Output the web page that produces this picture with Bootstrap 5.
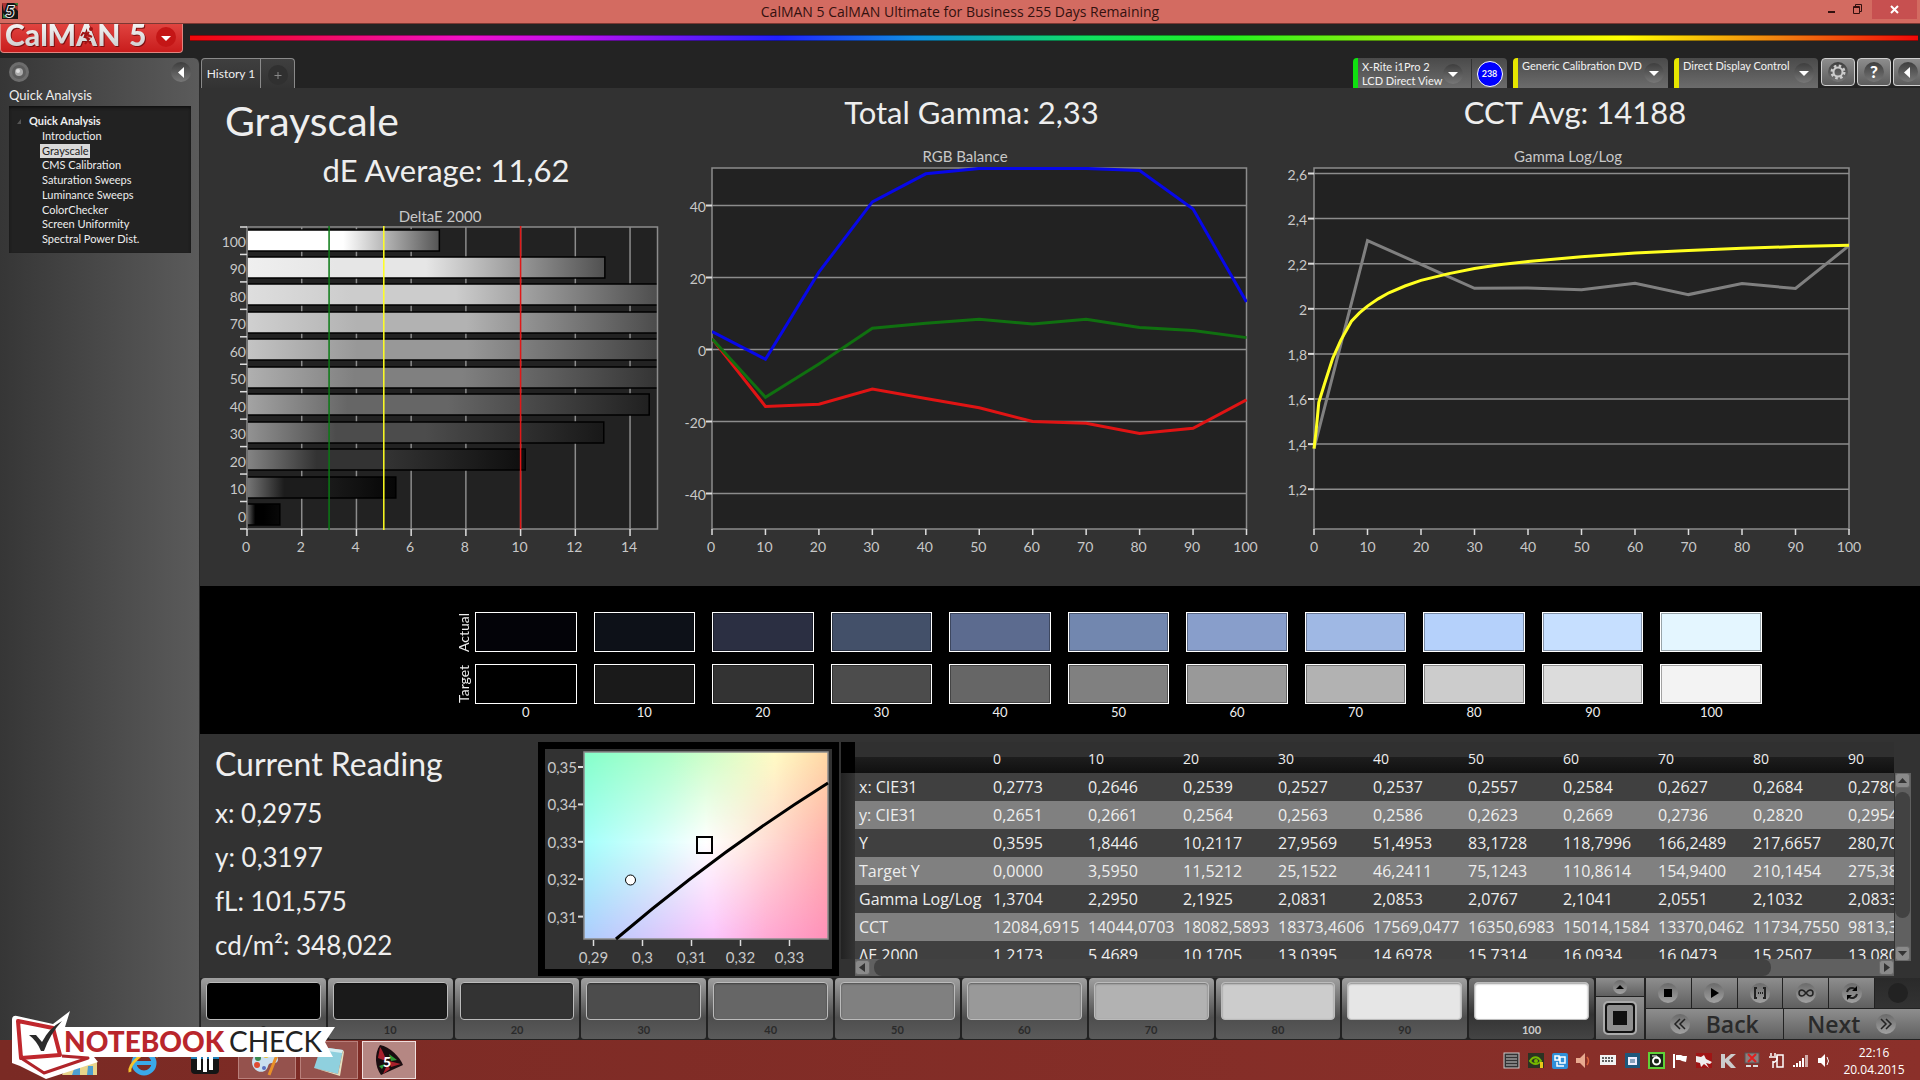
<!DOCTYPE html>
<html lang="en">
<head>
<meta charset="utf-8">
<meta name="viewport" content="width=device-width, initial-scale=1">
<title>CalMAN 5 CalMAN Ultimate for Business</title>
<link href="https://cdn.jsdelivr.net/npm/bootstrap@5.3.0/dist/css/bootstrap.min.css" rel="stylesheet">
<style>
body{background:#232323;color:#eee;font-family:Lato,"Open Sans",sans-serif;font-size:13px;line-height:16px;overflow:hidden}
button{border:0;padding:0;background:none;color:inherit;font:inherit}
svg{display:block;flex:none;overflow:visible}
a{color:inherit;text-decoration:none}
svg text{font-family:Lato,"Open Sans",sans-serif}
/* title bar */
.titlebar{height:24px;background:#d36b61;border-bottom:1px solid #7c3833;color:#33110f;font:14px/24px "Open Sans",sans-serif}
.titlebar>.winctl{right:0;top:0}
.winctl button{height:19px;width:26px}
.winctl .winclose{width:45px;background:#c75050;margin-right:3px}
/* brand row */
.brandrow{height:34px}
.brand{width:183px;height:29px;background:linear-gradient(#e04440,#c91c1c);border:1px solid #e08580;border-top:0;border-radius:0 0 4px 4px}
.brandtext{filter:drop-shadow(1px 1px 0 #7d1010)}
.rainbow{height:6px;margin:11px 2px 0 7px;background:linear-gradient(90deg,#f00808 0%,#f010c8 16%,#c010f0 22%,#2020ff 34%,#1090e0 42%,#10e060 52%,#20f020 60%,#80f010 68%,#ffff00 83%,#f08010 92%,#f00808 100%);border-top:1px solid #0006;border-bottom:1px solid #0006}
/* sidebar */
.sidebar{width:200px;background:linear-gradient(90deg,#363636,#5b5b5b);border-right:1px solid #2b2b2b;border-radius:0 6px 0 0}
.projectname{padding:3px 0 0 9px;height:22px}
.treebox{margin:0 8px 0 9px;height:147px;background:#222;box-shadow:inset 0 2px 3px #111;font-size:11px;line-height:14px;padding:8px 0 0 20px}
.treeitems{height:117px;margin:1px 0 0 11px}
.treeitems a{padding:0 1px 0 2px}
.treeitems .current{background:#d9d9d9;color:#222}
.twisty{margin:0 3px 0 -12px}
/* tabs and devices */
.toprow{height:30px}
.tabs{border:1px solid #8a8a8a;border-bottom:0;border-radius:4px 4px 0 0;background:linear-gradient(#3f3f3f,#333);height:30px;margin-left:1px}
.tabs button+button{border-left:1px solid #8a8a8a;width:34px}
.tabs button:first-child{width:58px;font-size:12px}
.device{height:30px;background:linear-gradient(#4a4a4a,#6c6c6c);border-left:5px solid #e6e600;border-radius:4px 4px 0 0;color:#f2f2f2;font-size:11px;line-height:14px;text-align:left;white-space:nowrap;margin-right:6px;padding-top:1px}
.device.ready{border-left-color:#10e010;width:154px}
.device button{text-align:left}
.dev-source{width:155px}
.dev-display{width:144px;margin-right:3px}
.meter{border-left:1px solid #333;width:36px}
.count{width:26px;height:26px;border-radius:50%;background:#00f;border:1px solid #fff;font-size:9px;font-weight:700;line-height:24px;text-align:center}
.toolbtn{width:34px;height:28px;border:1px solid #cfcfcf;border-radius:4px;background:linear-gradient(#8d8d8d,#5c5c5c);margin-right:2px}
.toolbtn:last-child{width:27px;margin-right:0}
/* work area */
.panel{background:#323232}
.charts{display:grid;grid-template-columns:492fr 572fr 656fr}
.charts svg{width:100%;height:auto}
h1{font-size:41px;line-height:56px;margin:5px 0 0 25px;font-weight:400}
h2{font-size:31px;line-height:42px;margin:0;text-align:center;font-weight:400}
.t-gamma{padding:3px 13px 0 0}
.t-cct{padding:3px 34px 0 0}
.swatchband{background:#000;height:148px;padding:26px 158px 0 252px}
.swatchrow{display:grid;grid-template-columns:repeat(11,1fr);gap:17px}
.swatchrow>div{height:40px;border:1px solid #fff;box-shadow:inset 0 0 0 1px #0005}
.swatchrow>span{text-align:center}
.sidelabel{writing-mode:vertical-rl;transform:rotate(180deg);width:23px;line-height:23px;height:40px;text-align:center;font-size:14px}
/* lower area */
.lower{height:244px;padding:8px 0 0 0}
.reading{width:338px;padding-left:15px}
.reading h2{text-align:left;font-size:32px;line-height:40px;margin-top:2px}
.reading p{font-size:26px;line-height:44px;margin:0}
.values{padding-top:7px}
.cie{border:7px solid #000;width:301px;height:234px;background:#323232}
.data{margin:0 0 0 2px;min-width:0}
.gridwrap{height:217px;overflow:hidden;font-family:"Open Sans",sans-serif;font-size:16px}
.gridwrap table{table-layout:fixed;width:1098px;border-collapse:collapse;white-space:nowrap}
.gridwrap th,.gridwrap td{height:28px;padding:1px 0 0 4px;font-weight:400;line-height:27px}
.gridwrap thead th{height:31px;font-size:14px;background:linear-gradient(#303030 0 48%,#1d1d1d 50%,#101010)}
.gridwrap thead th:first-child{background:#000}
.gridwrap tbody tr{background:#404040}
.gridwrap tbody tr:nth-child(even){background:#808080}
.gridwrap tbody td:first-child{background:linear-gradient(90deg,#222,#333)}
.scrollx{height:17px;background:#606060;margin-left:14px}
.scrollx .thumb{margin-right:108px}
.scrolly{width:17px;background:#606060;margin:31px 9px 17px 1px}
.scrolly .thumb{width:15px;height:126px}
.thumb{background:#424242;border-radius:8px}
.scrollbtn{width:15px;height:15px;background:#8a8a8a;border:1px solid #6a6a6a;border-radius:3px}
/* pattern strip */
.strip{height:62px;background:#222;padding:0 0 0 1px;gap:2px}
.patterns{gap:2px}
.pattern{flex:1 1 0;height:61px;border-radius:4px 4px 3px 3px;background:linear-gradient(#a0a0a0,#4e4e4e 65%,#5b5b5b);padding:4px 5px 0;color:#2b2b2b;font-size:11px;font-weight:700;display:flex;flex-direction:column;align-items:stretch}
.pattern i{display:block;height:38px;border-radius:4px;border:1px solid #bbb;box-shadow:inset 0 1px 2px #0006}
.pattern span{line-height:19px;text-align:center}
.pattern.on{background:linear-gradient(#777,#333 60%,#444);color:#ccc}
.pad{gap:1px}
.pad button{background:linear-gradient(#8e8e8e,#5f5f5f);display:flex;align-items:center;justify-content:center;color:#2a2a2a}
.pad .dim{background:linear-gradient(#2a2a2a,#333)}
.pad-view{width:48px}
.pad-view button:first-child{height:18px}
.pad-view button:last-child{height:42px}
.pad-run{width:274px}
.padrow{height:30px;gap:1px}
.padrow>button{flex:1 1 0}
.pad .stepbtn{gap:16px;font:600 23px/30px "Open Sans",sans-serif}
/* taskbar */
.taskbar{height:40px;background:linear-gradient(90deg,#7a2a24,#8b302a)}
.task{height:38px;width:58px;border:1px solid #b9807b;background:#95524d}
.task.active{width:54px;background:#b58783;border-color:#f0dedd}
.tasks{left:120px;top:1px;gap:4px}
.ie{width:45px}
.store{width:65px}
.clock{font:12px/17px "Open Sans",sans-serif;color:#fff;width:92px;text-align:center;padding-top:2px}
.logo{left:10px;bottom:0}
</style>
<script src="https://cdn.jsdelivr.net/npm/bootstrap@5.3.0/dist/js/bootstrap.bundle.min.js"></script>
</head>
<body class="vh-100 d-flex flex-column">
<svg width="0" height="0" class="position-absolute">
 <defs>
  <linearGradient id="knobLin" x1="0" y1="0" x2="0" y2="1"><stop offset="0" stop-color="#3e3e3e"/><stop offset="1" stop-color="#777"/></linearGradient>
  <linearGradient id="knobPad" x1="0" y1="0" x2="0" y2="1"><stop offset="0" stop-color="#6a6a6a"/><stop offset="1" stop-color="#a2a2a2"/></linearGradient>
  <linearGradient id="silver" x1="0" y1="0" x2="0" y2="1"><stop offset="0" stop-color="#fff"/><stop offset="1" stop-color="#c9c9c9"/></linearGradient>
 </defs>
 <symbol id="drop" viewBox="0 0 20 20"><circle cx="10" cy="10" r="10" fill="url(#knobLin)"/><path d="M5 8h10l-5 5z" fill="#fff"/></symbol>
</svg>

<header>
 <div class="titlebar position-relative text-center">
  <svg class="position-absolute start-0 top-0" width="20" height="22" viewBox="0 0 20 22"><rect x="2" y="3" width="16" height="16" fill="#151515"/><path d="M2 3h5l-3 9zM18 5v6l-4-4z" fill="#a33"/><path d="M3 13l4 5H3zM14 3h4v3z" fill="#3a7a35"/><text x="10" y="17" text-anchor="middle" font-size="15" font-weight="900" fill="#111" stroke="#eee" stroke-width="2" paint-order="stroke" font-style="italic">5</text></svg>
  <span>CalMAN 5 CalMAN Ultimate for Business 255 Days Remaining</span>
  <div class="winctl position-absolute d-flex">
   <button aria-label="Minimize"><svg width="26" height="19"><path d="M8 12h7" stroke="#33110f" stroke-width="2"/></svg></button>
   <button aria-label="Restore"><svg width="26" height="19"><path d="M7.500 6.500h6v7h-6zM7 7.500h7M9.500 6V4.500h6v7H14" stroke="#33110f" fill="none"/></svg></button>
   <button class="winclose" aria-label="Close"><svg width="45" height="19"><path d="M19 6l7 7m0-7l-7 7" stroke="#fff" stroke-width="2"/></svg></button>
  </div>
 </div>
 <div class="brandrow d-flex">
  <button class="brand" aria-label="CalMAN 5 menu"><svg width="181" height="28" viewBox="0 0 181 28"><g class="brandtext" font-size="30" font-weight="900" fill="url(#silver)"><text x="4" y="22">CalMAN</text><text x="128" y="22">5</text></g><g stroke="#a01414" stroke-width="2" fill="none"><path d="M88 8l-4 5 4 2-4 5M86 10l-4-1-2 3M87 11l4 2M86 15l4 5"/></g><circle cx="90" cy="5" r="2" fill="#a01414"/><circle cx="165" cy="13" r="10" fill="#c41616"/><path d="M160 12h10l-5 5z" fill="#fff"/></svg></button>
  <div class="rainbow flex-grow-1"></div>
 </div>
</header>

<div class="d-flex flex-grow-1">
 <aside class="sidebar flex-shrink-0">
  <div class="d-flex justify-content-between px-2 pt-1">
   <svg width="22" height="22"><circle cx="11" cy="10" r="10" fill="#6d6d6d"/><circle cx="11" cy="10" r="7" fill="#5c5c5c"/><circle cx="11" cy="10" r="4" fill="#aaa"/><circle cx="10" cy="9" r="2" fill="#ddd"/></svg>
   <button aria-label="Collapse"><svg width="20" height="22"><circle cx="10" cy="10" r="10" fill="url(#knobLin)"/><path d="M13 5v11l-6-5.500z" fill="#fff"/></svg></button>
  </div>
  <div class="projectname">Quick Analysis</div>
  <nav class="treebox">
   <div class="d-flex align-items-center fw-bold"><svg class="twisty" width="9" height="8"><path d="M4 7V2L0 7z" fill="#555"/></svg>Quick Analysis</div>
   <div class="treeitems d-flex flex-column justify-content-between align-items-start">
    <a href="#">Introduction</a><a href="#" class="current">Grayscale</a><a href="#">CMS Calibration</a><a href="#">Saturation Sweeps</a><a href="#">Luminance Sweeps</a><a href="#">ColorChecker</a><a href="#">Screen Uniformity</a><a href="#">Spectral Power Dist.</a>
   </div>
  </nav>
 </aside>

 <main class="flex-grow-1 d-flex flex-column overflow-hidden">
  <div class="toprow d-flex justify-content-between">
   <div class="tabs d-flex">
    <button class="text-nowrap">History 1</button>
    <button class="d-flex align-items-center justify-content-center" aria-label="Add tab"><svg width="20" height="20"><circle cx="10" cy="11" r="10" fill="#303030"/><path d="M10 8v7M6.500 11.500h7" stroke="#888"/></svg></button>
   </div>
   <div class="d-flex">
    <div class="device ready d-flex"><button class="flex-grow-1 d-flex justify-content-between align-items-center"><span class="ps-1">X-Rite i1Pro 2<br>LCD Direct View</span><svg class="me-2" width="20" height="20"><use href="#drop"/></svg></button><span class="meter d-flex align-items-center justify-content-center"><span class="count">238</span></span></div>
    <button class="device dev-source d-flex justify-content-between"><span class="ps-1">Generic Calibration DVD</span><svg class="mt-1 me-1" width="20" height="20"><use href="#drop"/></svg></button>
    <button class="device dev-display d-flex justify-content-between"><span class="ps-1">Direct Display Control</span><svg class="mt-1 me-1" width="20" height="20"><use href="#drop"/></svg></button>
    <button class="toolbtn" aria-label="Settings"><svg width="32" height="26"><circle cx="16" cy="13" r="10" fill="url(#knobLin)"/><circle cx="16" cy="13" r="6" fill="none" stroke="#ccc" stroke-width="3" stroke-dasharray="2.400 2.312"/><circle cx="16" cy="13" r="4.500" fill="none" stroke="#ccc" stroke-width="2"/></svg></button>
    <button class="toolbtn" aria-label="Help"><svg width="32" height="26"><circle cx="16" cy="13" r="10" fill="url(#knobLin)"/><text x="16" y="19" text-anchor="middle" font-size="17" font-weight="900" fill="#fff">?</text></svg></button>
    <button class="toolbtn border-end-0 rounded-end-0" aria-label="Back panel"><svg width="26" height="26"><circle cx="14" cy="13" r="10" fill="url(#knobLin)"/><path d="M16 8v11l-6-5.500z" fill="#fff"/></svg></button>
   </div>
  </div>

  <section class="panel charts flex-grow-1">
   <div><h1>Grayscale</h1><h2>dE Average: 11,62</h2><svg id="deltaE" viewBox="200 191 492 394"></svg></div>
   <div><h2 class="t-gamma">Total Gamma: 2,33</h2><svg id="rgb" viewBox="692 133 572 452"></svg></div>
   <div><h2 class="t-cct">CCT Avg: 14188</h2><svg id="gamma" viewBox="1264 133 656 452"></svg></div>
  </section>

  <section class="swatchband">
   <div class="d-flex"><div class="sidelabel">Actual</div><div id="actual" class="swatchrow flex-grow-1"></div></div>
   <div class="d-flex mt-2 pt-1"><div class="sidelabel">Target</div><div id="target" class="swatchrow flex-grow-1"></div></div>
   <div class="d-flex"><div class="sidelabel h-auto"></div><div id="levels" class="swatchrow flex-grow-1"></div></div>
  </section>

  <section class="panel lower d-flex">
   <div class="reading flex-shrink-0"><h2>Current Reading</h2><div class="values"><p>x: 0,2975</p><p>y: 0,3197</p><p>fL: 101,575</p><p>cd/m²: 348,022</p></div></div>
   <div class="cie flex-shrink-0"><svg id="cie" width="287" height="220" viewBox="545 749 287 220"></svg></div>
   <div class="data flex-grow-1 d-flex">
    <div class="flex-grow-1 overflow-hidden">
     <div class="gridwrap"><table><colgroup><col style="width:14px"><col style="width:134px"><col span="10" style="width:95px"></colgroup><thead id="thead"></thead><tbody id="tbody"></tbody></table></div>
     <div class="scrollx d-flex align-items-center"><button class="scrollbtn" aria-label="Scroll left"><svg width="13" height="13"><path d="M9 2v9L3 6.500z" fill="#333"/></svg></button><div class="thumb h-100 flex-grow-1 ms-1"></div><button class="scrollbtn" aria-label="Scroll right"><svg width="13" height="13"><path d="M4 2v9l6-4.500z" fill="#333"/></svg></button></div>
    </div>
    <div class="scrolly d-flex flex-column align-items-center"><button class="scrollbtn" aria-label="Scroll up"><svg width="13" height="13"><path d="M2 9h9L6.500 4z" fill="#333"/></svg></button><div class="thumb mt-1"></div><button class="scrollbtn mt-auto" aria-label="Scroll down"><svg width="13" height="13"><path d="M2 4h9L6.500 9z" fill="#333"/></svg></button></div>
   </div>
  </section>

  <section class="strip d-flex">
   <div id="patterns" class="patterns d-flex flex-grow-1"></div>
   <div class="pad pad-view d-flex flex-column">
    <button aria-label="Expand"><svg width="16" height="16"><circle cx="8" cy="8" r="7" fill="url(#knobPad)"/><path d="M4 10h8L8 6z"/></svg></button>
    <button aria-label="Pattern window"><svg width="34" height="34"><rect x="1" y="1" width="32" height="32" rx="4" fill="none" stroke="#aaa" stroke-width="2"/><rect x="3" y="3" width="28" height="28" rx="3" fill="#8f8f8f" stroke="#111" stroke-width="2"/><rect x="10" y="10" width="14" height="14" fill="#111"/></svg></button>
   </div>
   <div class="pad pad-run d-flex flex-column">
    <div class="padrow d-flex">
     <button aria-label="Stop"><svg width="20" height="20"><circle cx="10" cy="10" r="10" fill="url(#knobPad)"/><path d="M6 6h8v8H6z"/></svg></button>
     <button aria-label="Play"><svg width="20" height="20"><circle cx="10" cy="10" r="10" fill="url(#knobPad)"/><path d="M7 5v10l8-5z"/></svg></button>
     <button aria-label="Series"><svg width="20" height="20"><circle cx="10" cy="10" r="10" fill="url(#knobPad)"/><path d="M7 5H5v10h2M13 5h2v10h-2" fill="none" stroke="#222" stroke-width="2"/><path d="M8 10h1m1 0h1m1 0h1" stroke="#222" stroke-width="2"/></svg></button>
     <button aria-label="Continuous"><svg width="20" height="20"><circle cx="10" cy="10" r="10" fill="url(#knobPad)"/><path d="M10 10C8 7.500 7 7 6 7a3 3 0 0 0 0 6c1 0 2-.5 4-3s3-3 4-3a3 3 0 0 1 0 6c-1 0-2-.5-4-3z" fill="none" stroke="#222" stroke-width="1.500"/></svg></button>
     <button aria-label="Refresh"><svg width="20" height="20"><circle cx="10" cy="10" r="10" fill="url(#knobPad)"/><path d="M5 9a5 5 0 0 1 8-3M15 11a5 5 0 0 1-8 3" fill="none" stroke="#222" stroke-width="2"/><path d="M15 3v5h-5zM5 17v-5h5z"/></svg></button>
     <button class="dim" aria-label="Record"><svg width="20" height="20"><circle cx="10" cy="10" r="10" fill="#222"/></svg></button>
    </div>
    <div class="padrow d-flex">
     <button class="stepbtn"><svg width="20" height="20"><circle cx="10" cy="10" r="10" fill="url(#knobPad)"/><path d="M10 5l-5 5 5 5M15 5l-5 5 5 5" fill="none" stroke="#222" stroke-width="1.500"/></svg><span>Back</span></button>
     <button class="stepbtn"><span>Next</span><svg width="20" height="20"><circle cx="10" cy="10" r="10" fill="url(#knobPad)"/><path d="M5 5l5 5-5 5M10 5l5 5-5 5" fill="none" stroke="#222" stroke-width="1.500"/></svg></button>
    </div>
   </div>
  </section>
 </main>
</div>

<footer class="taskbar position-relative d-flex justify-content-end align-items-center flex-shrink-0">
 <div class="tasks position-absolute d-flex align-items-center">
  <button class="ie" aria-label="Internet Explorer"><svg width="45" height="38"><circle cx="24" cy="22" r="10" fill="none" stroke="#3aa9e8" stroke-width="5"/><path d="M16 22h17" stroke="#3aa9e8" stroke-width="4"/><path d="M10 31C8 24 24 8 36 9c3 1 2 4 0 7" fill="none" stroke="#f5c32c" stroke-width="3"/></svg></button>
  <button class="store" aria-label="Store"><svg width="65" height="38"><rect x="22" y="6" width="28" height="27" rx="4" fill="#151515"/><rect x="22" y="6" width="28" height="12" fill="#1d7fb8"/><path d="M30 13v16M36 13v18M42 13v16" stroke="#fff" stroke-width="4"/></svg></button>
  <button class="task" aria-label="Paint"><svg width="56" height="36"><path d="M13 20c0-8 10-14 20-10 8 4 8 12 0 11-5 0-3 4-6 7-4 4-14 1-14-8z" fill="#c9dff0"/><circle cx="19" cy="16" r="3" fill="#3a8a50"/><circle cx="18" cy="23" r="3" fill="#e04a30"/><circle cx="27" cy="13" r="3" fill="#e8c030"/><circle cx="25" cy="26" r="2" fill="#5a70c0"/><path d="M40 8L30 33" stroke="#e89028" stroke-width="3"/></svg></button>
  <button class="task" aria-label="Notepad"><svg width="56" height="36"><path d="M20 5l22 3-5 24-24-6z" fill="#8fd0de"/><path d="M20 5l22 3-1 3-22-3z" fill="#d8eef2"/><path d="M13 26l24 6 5-24 1 2-4 24z" fill="#e5e0c0"/></svg></button>
  <button class="task active" aria-label="CalMAN"><svg width="52" height="36"><path d="M17 3c10 2 20 12 23 20L18 33C12 25 11 12 17 3z" fill="#1a0d10"/><path d="M17 5c2 3 5 8 6 14l-8-3zM38 22l-12-3 2 6zM20 32l4-9 3 4z" fill="#a8202c"/><path d="M26 12l8 6-6 1zM16 24l6-2-3 5z" fill="#2f9a35"/><text x="24" y="25" text-anchor="middle" font-size="14" font-weight="900" fill="#fff">5</text></svg></button>
 </div>
 <svg id="tray" width="320" height="20" viewBox="1505 1050 320 20">
  <g transform="translate(1501 1053)"><rect width="15" height="15" fill="#333" stroke="#ccc"/><path d="M2 3h11M2 6h11M2 9h11M2 12h11" stroke="#ccc"/></g>
  <g transform="translate(1525 1053)"><rect width="16" height="15" fill="#2c3322"/><path d="M2 8c3-5 8-5 11 0-3 4-8 4-11 0z" fill="none" stroke="#76b900" stroke-width="2"/><circle cx="8" cy="8" r="2" fill="#76b900"/><path d="M12 9h3v6h-3z" fill="#e8c818"/></g>
  <g transform="translate(1549 1053)"><rect width="16" height="16" rx="2" fill="#2f8fd8"/><path d="M3 3h4v4H3zM8 4h5v6H8zM5 9v4h7" fill="none" stroke="#fff" stroke-width="1.500"/></g>
  <g transform="translate(1572 1053)"><path d="M1 5h4l5-5v15l-5-5H1z" fill="#e8aa90"/><path d="M12 4q3 4 0 8" stroke="#d8603a" fill="none" stroke-width="1.500"/></g>
  <g transform="translate(1597 1055)"><rect width="16" height="10" fill="#f2f2f2"/><path d="M2 3h12M2 6h12" stroke="#333" stroke-width="1.500" stroke-dasharray="2 1"/></g>
  <g transform="translate(1622 1053)"><rect width="15" height="15" fill="#1e587c"/><rect x="3" y="4" width="9" height="8" fill="#eef"/><path d="M5 7h5M5 9h5" stroke="#1e587c"/></g>
  <g transform="translate(1645 1053)"><rect x="1" y="0" width="15" height="15" fill="#172417" stroke="#5fd038" stroke-width="2"/><circle cx="8.500" cy="8" r="3.500" fill="none" stroke="#fff" stroke-width="2"/><path d="M4 3h5v3" stroke="#fff" fill="none"/></g>
  <g transform="translate(1669 1053)"><path d="M2 1v14" stroke="#fff" stroke-width="2"/><path d="M4 2h5l2 1h4l-1 6-4-1-2-1H4z" fill="#fff"/></g>
  <g transform="translate(1693 1053)"><rect width="16" height="15" fill="#a01515"/><path d="M0 3l5 1 3-2 2 4 6 3-2 2-4-1 3 5-5-4-3 3-1-4-4-1z" fill="#eee"/></g>
  <g transform="translate(1717 1053)"><path d="M1 1h4v5l6-5h5L9 7l7 8h-5L5 9v6H1z" fill="#ccc"/></g>
  <g transform="translate(1742 1053)"><rect width="14" height="10" fill="#8c7f7e" stroke="#555"/><path d="M3 1l8 8m0-8l-8 8" stroke="#e02020" stroke-width="2"/><path d="M1 13h5M8 13h5" stroke="#ddd" stroke-width="2"/></g>
  <g transform="translate(1766 1053)"><path d="M2 0v3M6 0v3M0 4h8v3q-4 4-4 1v7" stroke="#fff" fill="none" stroke-width="1.500"/><rect x="8" y="2" width="6" height="12" fill="none" stroke="#fff" stroke-width="1.500"/></g>
  <g transform="translate(1790 1053)" fill="#fff"><path d="M0 12h2v2H0zM3 10h2v4H3zM6 8h2v6H6zM9 5h2v9H9z"/><path d="M12 2h3v12h-3z" opacity=".6"/></g>
  <g transform="translate(1815 1053)"><path d="M0 5h3l4-4v13l-4-4H0z" fill="#fff"/><path d="M9 4q3 4 0 8" stroke="#fff" fill="none"/></g>
 </svg>
 <div class="clock"><div>22:16</div><div>20.04.2015</div></div>

 <svg class="logo position-absolute" width="330" height="70" viewBox="10 1010 330 70" role="img">
  <path d="M70 1062h27v13H62z" fill="#e8d48a"/><path d="M75 1066h5v9h-8zM88 1066h5v9h-6z" fill="#4d9fd0"/>
  <path d="M12 1020q0-5 5-4l36 8 17-13-5 16h270l-10 15 8 15H94l4 5-52 17-26-13-8-3z" fill="#fff"/>
  <path d="M18 1021l35 7 7 27-39 3z" fill="none" stroke="#c0272d" stroke-width="4" stroke-linejoin="round"/>
  <path d="M21 1058l23 15 44-15-26-2" fill="none" stroke="#b0242a" stroke-width="3" stroke-linejoin="round"/>
  <path d="M29 1035l7 0 6 7q7-14 20-21-12 13-18 30l-3 0q-4-10-12-16z" fill="#2b2b2b"/>
  <text x="64" y="1052" font-size="28" font-weight="900" fill="#b9262c">NOTEBOOK</text>
  <text x="229" y="1052" font-size="28" fill="#222">CHECK</text>
 </svg>
</footer>

<script>
const q = id => document.getElementById(id);
const line = (x1,y1,x2,y2,c,w) => `<line x1="${x1}" y1="${y1}" x2="${x2}" y2="${y2}" stroke="${c}" stroke-width="${w||2}"/>`;
const txt = (x,y,s,a,f) => `<text x="${x}" y="${y}" text-anchor="${a||'middle'}" font-size="${f||14}" fill="#c8c8c8">${s}</text>`;
const frame = (x,y,w,h,f) => `<rect x="${x}" y="${y}" width="${w}" height="${h}" fill="${f||'none'}" stroke="#8c8c8c" stroke-width="1.500"/>`;

// DeltaE 2000 bar chart
{
 const X=247, Y=227, S=27.36, P=27.45, W=410.5, H=302;
 const bars=[[100,7.03,'#fff','#fff','#555'],[90,13.08,'#efefef','#e6e6e6','#505050'],[80,15.25,'#dedede','#ccc','#4a4a4a'],[70,16.05,'#d0d0d0','#b2b2b2','#3c3c3c'],[60,16.09,'#c4c4c4','#989898','#333'],[50,15.73,'#b0b0b0','#808080','#2c2c2c'],[40,14.7,'#a4a4a4','#666','#202020'],[30,13.04,'#939393','#4c4c4c','#181818'],[20,10.17,'#858585','#333','#0e0e0e'],[10,5.44,'#777','#1c1c1c','#060606'],[0,1.2,'#666','#000','#080808']];
 let s='<defs><clipPath id="cd"><rect x="247" y="227" width="411" height="302"/></clipPath>', b='';
 bars.forEach(([l,v,a,m,e],i)=>{
  s+=`<linearGradient id="b${l}"><stop offset="0" stop-color="${a}"/><stop offset=".25" stop-color="${m}"/><stop offset=".5" stop-color="${m}"/><stop offset="1" stop-color="${e}"/></linearGradient>`;
  b+=`<rect x="${X}" y="${Math.round(Y+i*P+2.5)}" width="${v*S}" height="21" fill="url(#b${l})" stroke="#000" stroke-width="1.500"/>`;
 });
 s+='</defs>'+txt(440,222,'DeltaE 2000','middle',15)+`<rect x="${X}" y="${Y}" width="${W}" height="${H}" fill="#222"/>`;
 for(let k=2;k<15;k+=2) s+=line(X+k*S,Y,X+k*S,Y+H,'#8c8c8c',1.5);
 s+=`<g clip-path="url(#cd)">${b}</g>`+frame(X,Y,W,H);
 s+=line(X+3*S,Y-1,X+3*S,Y+H+1,'#0a7a14',1.5)+line(X+5*S,Y-1,X+5*S,Y+H+1,'#ffff20',1.5)+line(X+10*S,Y-1,X+10*S,Y+H+1,'#e01818',1.5);
 for(let k=0;k<15;k+=2) s+=line(X+k*S,Y+H,X+k*S,Y+H+7,'#ddd',1.5)+txt(X+k*S-1,552,k);
 for(let i=0;i<12;i++) s+=line(X-7,Y+i*P,X,Y+i*P,'#ddd',1.5);
 bars.forEach((r,i)=>s+=txt(X-1,Y+i*P+20,r[0],'end'));
 q('deltaE').innerHTML=s;
}
const tens=[0,10,20,30,40,50,60,70,80,90,100];
// RGB balance
{
 const X=712, Y=168, W=534.5, H=361, y=v=>349.5-v*3.6, x=v=>X+v*W/100;
 let s='<defs><clipPath id="cr"><rect x="712" y="167" width="535" height="363"/></clipPath></defs>'+txt(965,162,'RGB Balance','middle',15)+frame(X,Y,W,H,'#222');
 for(const v of [40,20,0,-20,-40]) s+=line(X,y(v),X+W,y(v),'#8c8c8c',1.5)+line(X-6,y(v),X,y(v),'#ddd')+txt(X-6,y(v)+6,v,'end');
 tens.forEach(v=>s+=line(x(v),Y+H,x(v),Y+H+6,'#ddd',1.5)+txt(x(v)-1,552,v));
 const pl=(d,c)=>`<polyline fill="none" stroke="${c}" stroke-width="3" points="${d.map((v,i)=>x(i*10)+','+y(v)).join(' ')}"/>`;
 s+='<g clip-path="url(#cr)">'+pl([3,-15.8,-15.2,-11,-13.6,-16.2,-20,-20.5,-23.3,-21.9,-14],'#e01414')+pl([3,-13.3,-4,5.9,7.3,8.4,7.1,8.4,6.1,5.3,3.3],'#107010')+pl([5,-2.7,21.5,41,48.8,50.3,50.3,50.3,49.7,39,13.2],'#0808e8')+'</g>';
 q('rgb').innerHTML=s;
}
// Gamma Log/Log
{
 const X=1314, Y=168, W=535, H=361, y=v=>173.5+(2.6-v)*225.5, x=v=>X+v*W/100;
 let s=txt(1568,162,'Gamma Log/Log','middle',15)+frame(X,Y,W,H,'#222');
 ['2,6','2,4','2,2','2','1,8','1,6','1,4','1,2'].forEach((l,i)=>{const yy=y(2.6-i*.2); s+=line(X,yy,X+W,yy,'#8c8c8c',1.5)+line(X-6,yy,X,yy,'#ddd')+txt(X-7,yy+6,l,'end');});
 tens.forEach(v=>s+=line(x(v),Y+H,x(v),Y+H+6,'#ddd',1.5)+txt(x(v),552,v));
 const pl=(d,c)=>`<polyline fill="none" stroke="${c}" stroke-width="3" points="${d.map(p=>x(p[0])+','+y(p[1])).join(' ')}"/>`;
 s+=pl([[0,1.38],[10,2.302],[20,2.197],[30,2.091],[40,2.092],[50,2.084],[60,2.113],[70,2.063],[80,2.112],[90,2.09],[100,2.28]],'#808080');
 s+=pl([[0,1.38],[.4,1.46],[.9,1.585],[2,1.67],[3.5,1.78],[5,1.86],[7,1.945],[8.5,1.982],[10,2.012],[12,2.044],[14,2.071],[17,2.101],[20,2.126],[25,2.155],[30,2.179],[35,2.196],[40,2.210],[50,2.231],[60,2.247],[70,2.259],[80,2.268],[90,2.276],[100,2.282]],'#ffff20');
 q('gamma').innerHTML=s;
}
// CIE detail
{
 let s=`<defs><linearGradient id="c1" x1="0" y1="0" x2="1" y2="0"><stop offset="0" stop-color="#84ffc8"/><stop offset=".35" stop-color="#b0ffc8"/><stop offset=".78" stop-color="#fffcc4"/><stop offset="1" stop-color="#ffd8a4"/></linearGradient>
 <linearGradient id="c2" x1="0" y1="0" x2="1" y2="0"><stop offset="0" stop-color="#a4fffb"/><stop offset=".28" stop-color="#d4fffc"/><stop offset=".5" stop-color="#fff"/><stop offset=".65" stop-color="#ffefe6"/><stop offset="1" stop-color="#ffb0ac"/></linearGradient>
 <linearGradient id="c3" x1="0" y1="0" x2="1" y2="0"><stop offset="0" stop-color="#acccfc"/><stop offset=".53" stop-color="#fbc4fc"/><stop offset=".75" stop-color="#ffa8d4"/><stop offset="1" stop-color="#ff90b8"/></linearGradient>
 <linearGradient id="m1" x1="0" y1="0" x2="0" y2="1"><stop offset="0" stop-color="#fff"/><stop offset=".48" stop-color="#000"/></linearGradient>
 <linearGradient id="m3" x1="0" y1="0" x2="0" y2="1"><stop offset=".48" stop-color="#000"/><stop offset="1" stop-color="#fff"/></linearGradient>
 <mask id="k1"><rect x="583" y="751" width="246" height="189" fill="url(#m1)"/></mask><mask id="k3"><rect x="583" y="751" width="246" height="189" fill="url(#m3)"/></mask></defs>`;
 const r=f=>`<rect x="584" y="752" width="244" height="187" ${f}/>`;
 s+=r('fill="url(#c2)"')+r('fill="url(#c1)" mask="url(#k1)"')+r('fill="url(#c3)" mask="url(#k3)"')+frame(584,752,244,187);
 s+='<path d="M616 939Q718 852 828 783" fill="none" stroke="#000" stroke-width="3"/><rect x="697" y="837" width="15" height="16" fill="none" stroke="#000" stroke-width="2"/><circle cx="630.500" cy="880" r="5" fill="#fff" stroke="#000"/>';
 ['0,35','0,34','0,33','0,32','0,31'].forEach((l,i)=>{const y=767+i*37.4; s+=line(578,y,583,y,'#ddd')+txt(577,y+6,l,'end',15);});
 ['0,29','0,3','0,31','0,32','0,33'].forEach((l,i)=>{const x=593.5+i*49; s+=line(x,940,x,946,'#ddd',1.5)+txt(x,963,l,'middle',15);});
 q('cie').innerHTML=s;
}
// swatches
const greys=['#000','#1a1a1a','#333','#4c4c4c','#666','#808080','#999','#b2b2b2','#ccc','#dcdcdc','#f3f3f3'];
const act=['#030308','#0d1118','#2b2f42','#435069','#5c6b8f','#7287af','#889ecb','#9fb8e4','#b5d1fb','#c6dfff','#e4f6ff'];
q('actual').innerHTML=act.map(c=>`<div style="background:${c}"></div>`).join('');
q('target').innerHTML=greys.map(c=>`<div style="background:${c}"></div>`).join('');
q('levels').innerHTML=tens.map(v=>`<span>${v}</span>`).join('');
q('patterns').innerHTML=tens.map((v,i)=>`<button class="pattern${v==100?' on':''}"><i style="background:${v==100?'#fff':v==90?'#e6e6e6':greys[i]}"></i><span>${v}</span></button>`).join('');
// measurements
const rows=[['x: CIE31','0,2773','0,2646','0,2539','0,2527','0,2537','0,2557','0,2584','0,2627','0,2684','0,2780'],
['y: CIE31','0,2651','0,2661','0,2564','0,2563','0,2586','0,2623','0,2669','0,2736','0,2820','0,2954'],
['Y','0,3595','1,8446','10,2117','27,9569','51,4953','83,1728','118,7996','166,2489','217,6657','280,7012'],
['Target Y','0,0000','3,5950','11,5212','25,1522','46,2411','75,1243','110,8614','154,9400','210,1454','275,3861'],
['Gamma Log/Log','1,3704','2,2950','2,1925','2,0831','2,0853','2,0767','2,1041','2,0551','2,1032','2,0833'],
['CCT','12084,6915','14044,0703','18082,5893','18373,4606','17569,0477','16350,6983','15014,1584','13370,0462','11734,7550','9813,3210'],
['ΔE 2000','1,2173','5,4689','10,1705','13,0395','14,6978','15,7314','16,0934','16,0473','15,2507','13,0804']];
q('thead').innerHTML='<tr><th></th><th></th>'+tens.slice(0,10).map(v=>`<th>${v}</th>`).join('')+'</tr>';
q('tbody').innerHTML=rows.map(r=>'<tr><td></td>'+r.map(c=>`<td>${c}</td>`).join('')+'</tr>').join('');
</script>
</body>
</html>
